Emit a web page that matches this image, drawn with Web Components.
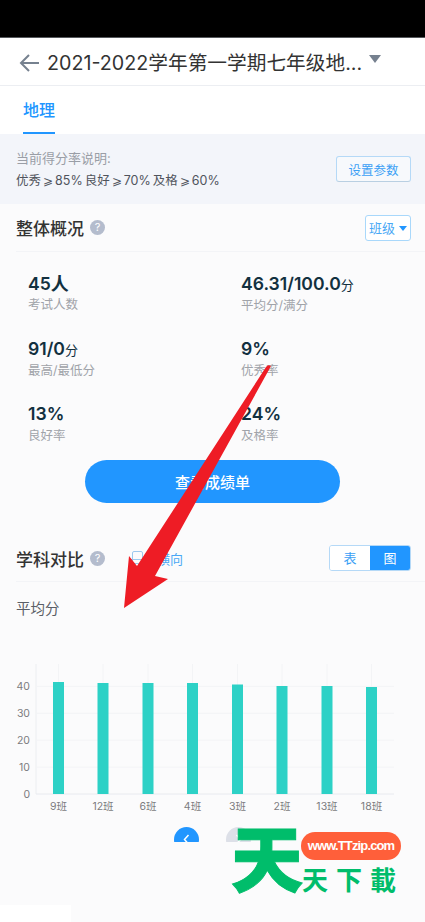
<!DOCTYPE html>
<html lang="zh">
<head>
<meta charset="utf-8">
<title>地理</title>
<style>
    html, body {
        margin: 0;
        padding: 0;
        background: #fbfbfc;
    }
    body {
        position: relative;
        width: 425px;
        height: 922px;
        overflow: hidden;
        font-family: "Inter", "Noto Sans CJK SC", sans-serif;
    }
</style>
</head>
<body>
<app-header title="2021-2022学年第一学期七年级地..."></app-header>
<subject-tabs label="地理"></subject-tabs>
<score-notice></score-notice>
<section-head heading="整体概况" style="height:48px">
    <class-select slot="right"></class-select>
</section-head>
<stat-grid>
    <stat-item value="45" unit="人" label="考试人数"></stat-item>
    <stat-item value="46.31/100.0" unit="分" label="平均分/满分"></stat-item>
    <stat-item value="91/0" unit="分" label="最高/最低分"></stat-item>
    <stat-item value="9%" label="优秀率"></stat-item>
    <stat-item value="13%" label="良好率"></stat-item>
    <stat-item value="24%" label="及格率"></stat-item>
</stat-grid>
<primary-button>查看成绩单</primary-button>
<section-head heading="学科对比" style="height:47px;margin-top:32px">
    <landscape-link slot="left"></landscape-link>
    <view-toggle slot="right"></view-toggle>
</section-head>
<bar-chart heading="平均分"></bar-chart>
<chart-pager></chart-pager>
<red-arrow></red-arrow>
<site-mark></site-mark>
<div style="position:absolute;left:0;bottom:0;width:71px;height:17px;background:#fff"></div>

<script>
class AppHeader extends HTMLElement {
    constructor() {
        super();
        this.attachShadow({ mode: 'open' });
    }

    connectedCallback() {
        this.shadowRoot.innerHTML = `
            <style>
                :host { display: block; }
                .status { height: 37px; background: #000; border-bottom: 1px solid #55585c; }
                .bar {
                    height: 47px;
                    background: #fff;
                    border-bottom: 1px solid #eceef2;
                    display: flex;
                    align-items: center;
                    padding-left: 19px;
                    color: #333;
                }
                svg { flex: none; margin-right: 8px; margin-top: 2px; }
                .title { font-size: 19.7px; white-space: nowrap; }
                .caret {
                    width: 0; height: 0; margin: 0 0 6px 7px;
                    border-left: 6px solid transparent;
                    border-right: 6px solid transparent;
                    border-top: 8px solid #76818f;
                }
            </style>
            <div class="status"></div>
            <div class="bar">
                <svg width="20" height="18" viewBox="0 0 20 18" fill="none" stroke="#76818f" stroke-width="2">
                    <path d="M20 9H2M10 1L2 9l8 8"/>
                </svg>
                <span class="title">${this.getAttribute('title')}</span>
                <span class="caret"></span>
            </div>
        `;
    }
}

class SubjectTabs extends HTMLElement {
    constructor() {
        super();
        this.attachShadow({ mode: 'open' });
    }

    connectedCallback() {
        this.shadowRoot.innerHTML = `
            <style>
                :host { display: block; height: 48px; background: #fff; padding-left: 23px; }
                .tab {
                    display: inline-block;
                    height: 46px;
                    line-height: 49px;
                    border-bottom: 2px solid #2196ff;
                    color: #2196ff;
                    font-size: 16px;
                    font-weight: 500;
                }
            </style>
            <span class="tab">${this.getAttribute('label')}</span>
        `;
    }
}

class ScoreNotice extends HTMLElement {
    constructor() {
        super();
        this.attachShadow({ mode: 'open' });
    }

    connectedCallback() {
        this.shadowRoot.innerHTML = `
            <style>
                :host {
                    display: flex;
                    height: 70px;
                    box-sizing: border-box;
                    background: #f3f5fa;
                    padding: 0 14px 0 16px;
                    align-items: center;
                    justify-content: space-between;
                }
                .t1 { font-size: 13px; color: #9a9ea6; line-height: 22px; }
                .t2 { font-size: 12.5px; color: #50545c; line-height: 22px; margin-top: 1px; word-spacing: -1.5px; white-space: nowrap; }
                .t2 b { font-size: 11.5px; font-weight: 400; }
                button {
                    width: 75px;
                    height: 26px;
                    padding: 0;
                    border: 1px solid #b5d9f7;
                    border-bottom-color: #b9cfe2;
                    border-radius: 3px;
                    background: #f7f9fc;
                    color: #3ba0f5;
                    font: 12.5px "Inter", "Noto Sans CJK SC", sans-serif;
                }
            </style>
            <div>
                <div class="t1">当前得分率说明:</div>
                <div class="t2">优秀 <b>⩾</b> 85% 良好 <b>⩾</b> 70% 及格 <b>⩾</b> 60%</div>
            </div>
            <button>设置参数</button>
        `;
    }
}

class SectionHead extends HTMLElement {
    constructor() {
        super();
        this.attachShadow({ mode: 'open' });
    }

    connectedCallback() {
        this.shadowRoot.innerHTML = `
            <style>
                :host {
                    display: flex;
                    box-sizing: border-box;
                    margin-left: 16px;
                    padding-right: 14px;
                    align-items: center;
                    border-bottom: 1px solid #f3f4f7;
                }
                h2 { margin: 0; font-size: 17px; font-weight: 500; color: #333; }
                .help {
                    width: 15px; height: 15px; border-radius: 50%;
                    margin-left: 6px;
                    background: #b4bccd; color: #fff;
                    font-size: 11px; line-height: 15px; text-align: center;
                }
                .right { margin-left: auto; display: flex; }
            </style>
            <h2>${this.getAttribute('heading')}</h2>
            <span class="help">?</span>
            <slot name="left"></slot>
            <div class="right"><slot name="right"></slot></div>
        `;
    }
}

class ClassSelect extends HTMLElement {
    constructor() {
        super();
        this.attachShadow({ mode: 'open' });
    }

    connectedCallback() {
        this.shadowRoot.innerHTML = `
            <style>
                :host {
                    display: flex;
                    box-sizing: border-box;
                    width: 46px; height: 26px;
                    align-items: center;
                    padding-left: 3px;
                    border: 1px solid #a9d8fb;
                    border-radius: 3px;
                    background: #fff;
                    color: #4aa8f5;
                    font-size: 13px;
                }
                i {
                    margin: 1px 0 0 4px;
                    border-left: 4.5px solid transparent;
                    border-right: 4.5px solid transparent;
                    border-top: 5px solid #2196ff;
                }
            </style>
            班级<i></i>
        `;
    }
}

class StatGrid extends HTMLElement {
    constructor() {
        super();
        this.attachShadow({ mode: 'open' });
    }

    connectedCallback() {
        this.shadowRoot.innerHTML = `
            <style>
                :host {
                    display: grid;
                    grid-template-columns: 213px 1fr;
                    grid-auto-rows: 65px;
                    padding: 19px 0 0 28px;
                    height: 208px;
                    box-sizing: border-box;
                }
            </style>
            <slot></slot>
        `;
    }
}

class StatItem extends HTMLElement {
    constructor() {
        super();
        this.attachShadow({ mode: 'open' });
    }

    connectedCallback() {
        const unit = this.getAttribute('unit') || '';
        const big = unit === '人';
        this.shadowRoot.innerHTML = `
            <style>
                :host { display: block; }
                .v { font-size: 17.6px; font-weight: 600; line-height: 26px; color: #12303f; white-space: nowrap; }
                .v small { font-size: ${big ? 18 : 13}px; font-weight: ${big ? 600 : 400}; }
                .l { font-size: 12.5px; line-height: 18px; margin-top: -1px; color: #a0a3a9; }
            </style>
            <div class="v">${this.getAttribute('value')}<small>${unit}</small></div>
            <div class="l">${this.getAttribute('label')}</div>
        `;
    }
}

class PrimaryButton extends HTMLElement {
    constructor() {
        super();
        this.attachShadow({ mode: 'open' });
    }

    connectedCallback() {
        this.shadowRoot.innerHTML = `
            <style>
                :host {
                    display: flex;
                    width: 255px;
                    height: 43px;
                    margin-left: 85px;
                    align-items: center;
                    justify-content: center;
                    border-radius: 22px;
                    background: #2196ff;
                    color: #fff;
                    font-size: 15px;
                    font-weight: 500;
                }
            </style>
            <slot></slot>
        `;
    }
}

class LandscapeLink extends HTMLElement {
    constructor() {
        super();
        this.attachShadow({ mode: 'open' });
    }

    connectedCallback() {
        this.shadowRoot.innerHTML = `
            <style>
                :host {
                    display: flex;
                    margin-left: 26px;
                    align-items: center;
                    gap: 12px;
                    color: #4aa8f5;
                    font-size: 13px;
                }
            </style>
            <svg width="14" height="14" viewBox="0 0 14 14" fill="none" stroke="#9cc9ee" stroke-width="1">
                <rect x="1.5" y="0.5" width="10" height="12" rx="1.5"/>
                <path d="M0 8.5h14"/>
            </svg>
            <span>横向</span>
        `;
    }
}

class ViewToggle extends HTMLElement {
    constructor() {
        super();
        this.attachShadow({ mode: 'open' });
    }

    connectedCallback() {
        this.shadowRoot.innerHTML = `
            <style>
                :host {
                    display: flex;
                    width: 82px; height: 26px;
                    box-sizing: border-box;
                    border: 1px solid #b5d9f7;
                    border-radius: 3px;
                    overflow: hidden;
                    font-size: 13px;
                    line-height: 24px;
                    text-align: center;
                }
                span { flex: 1; background: #fff; color: #3ba0f5; }
                .on { background: #2196ff; color: #fff; }
            </style>
            <span>表</span><span class="on">图</span>
        `;
    }
}

class BarChart extends HTMLElement {
    constructor() {
        super();
        this.attachShadow({ mode: 'open' });
    }

    connectedCallback() {
        const bars = [
            ['9班', 58.5, 683], ['12班', 103, 684], ['6班', 148, 684], ['4班', 192.5, 684],
            ['3班', 237.5, 685.5], ['2班', 282, 687], ['13班', 327, 687], ['18班', 371.5, 688]
        ];
        const base = 795 - 650;
        let grid = '';
        for (let i = 0; i <= 4; i++) {
            const y = base - i * 26.9;
            grid += `<path d="M36 ${y}H394" stroke="${i ? '#f3f4f6' : '#e8eaef'}"/>`;
            grid += `<text x="30" y="${y + 4}" text-anchor="end">${i * 10}</text>`;
        }
        let cols = '';
        for (const [name, x, top] of bars) {
            cols += `<path d="M${x} 15V145" stroke="#f3f4f6"/>`;
            cols += `<rect x="${x - 5.5}" y="${top - 650}" width="11" height="${795 - top}" fill="#2dd1c6"/>`;
            cols += `<text x="${x}" y="161" text-anchor="middle">${name}</text>`;
        }
        this.shadowRoot.innerHTML = `
            <style>
                :host { display: block; }
                h3 { margin: 0; padding: 15px 0 0 16px; height: 67px; box-sizing: border-box; font-size: 14.5px; font-weight: 400; color: #5a5e66; }
                svg { display: block; }
                text { font-size: 10.5px; fill: #7c7c80; }
            </style>
            <h3>${this.getAttribute('heading')}</h3>
            <svg width="425" height="175" viewBox="0 0 425 175">
                <path d="M36 15V145" stroke="#eceef1"/>
                ${grid}
                ${cols}
            </svg>
        `;
    }
}

class ChartPager extends HTMLElement {
    constructor() {
        super();
        this.attachShadow({ mode: 'open' });
    }

    connectedCallback() {
        this.shadowRoot.innerHTML = `
            <style>
                :host {
                    display: flex;
                    height: 15px;
                    margin-top: 3px;
                    padding-left: 174px;
                    gap: 27px;
                    overflow: hidden;
                }
                svg { flex: none; }
            </style>
            <svg width="25" height="25" viewBox="0 0 25 25">
                <circle cx="12.5" cy="12.5" r="12.5" fill="#2196ff"/>
                <path d="M14.5 8l-4 4.5 4 4.5" fill="none" stroke="#fff" stroke-width="1.5"/>
            </svg>
            <svg width="25" height="25" viewBox="0 0 25 25">
                <circle cx="12.5" cy="12.5" r="12.5" fill="#dde0e8"/>
                <path d="M10.5 8l4 4.5-4 4.5" fill="none" stroke="#fff" stroke-width="1.5"/>
            </svg>
        `;
    }
}

class RedArrow extends HTMLElement {
    constructor() {
        super();
        this.attachShadow({ mode: 'open' });
    }

    connectedCallback() {
        this.shadowRoot.innerHTML = `
            <style>
                :host { position: absolute; left: 0; top: 0; display: block; pointer-events: none; }
                svg { display: block; }
            </style>
            <svg width="425" height="922" viewBox="0 0 425 922">
                <path d="M266 367Q268 364 271 366L155 576 168 579 124 608 129 556 137 566Z" fill="#ee1c25"/>
            </svg>
        `;
    }
}

class SiteMark extends HTMLElement {
    constructor() {
        super();
        this.attachShadow({ mode: 'open' });
    }

    connectedCallback() {
        this.shadowRoot.innerHTML = `
            <style>
                :host {
                    position: absolute; left: 228px; top: 816px;
                    display: block; width: 180px; height: 90px;
                    color: #00bd6b;
                    font-family: "Noto Sans CJK SC", sans-serif;
                    font-weight: 900;
                }
                .big { position: absolute; left: 3px; top: 3px; font-size: 72px; line-height: 72px; -webkit-text-stroke: 1px #00bd6b; }
                .pill {
                    position: absolute; left: 73px; top: 16px;
                    width: 100px; height: 28px;
                    border-radius: 14px;
                    background: #ff5f3a;
                    color: #fff;
                    font: 700 13px/28px "Liberation Sans", sans-serif;
                    letter-spacing: -0.85px;
                    text-align: center;
                }
                .small { position: absolute; left: 74px; top: 48px; font-size: 26px; font-weight: 700; line-height: 30px; letter-spacing: 8px; white-space: nowrap; }
            </style>
            <span class="big">天</span>
            <span class="pill">www.TTzip.com</span>
            <span class="small">天下載</span>
        `;
    }
}

customElements.define('app-header', AppHeader);
customElements.define('subject-tabs', SubjectTabs);
customElements.define('score-notice', ScoreNotice);
customElements.define('section-head', SectionHead);
customElements.define('class-select', ClassSelect);
customElements.define('stat-grid', StatGrid);
customElements.define('stat-item', StatItem);
customElements.define('primary-button', PrimaryButton);
customElements.define('landscape-link', LandscapeLink);
customElements.define('view-toggle', ViewToggle);
customElements.define('bar-chart', BarChart);
customElements.define('chart-pager', ChartPager);
customElements.define('red-arrow', RedArrow);
customElements.define('site-mark', SiteMark);
</script>
</body>
</html>
